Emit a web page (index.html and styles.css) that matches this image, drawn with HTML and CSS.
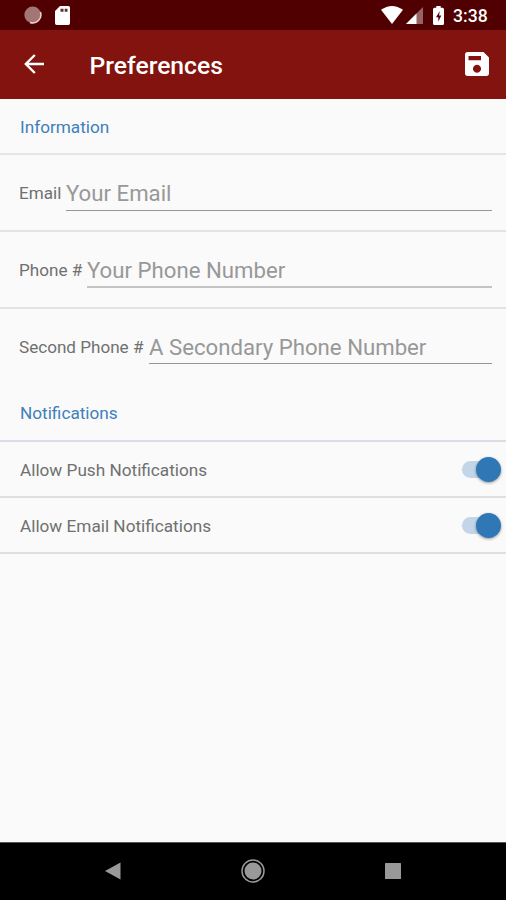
FILE: index.html
```html
<!DOCTYPE html>
<html lang="en">
<head>
<meta charset="utf-8">
<title>Preferences</title>
<link rel="stylesheet" href="styles.css">
</head>
<body>
<div class="screen">
  <div class="status">
    <svg class="sync" width="18" height="18" viewBox="0 0 18 18"><circle cx="8.700" cy="8.900" r="8.300" fill="#a37676"/><path d="M16.400 6A8.200 8.200 0 0 1 6 16.500" fill="none" stroke="#e9d5d0" stroke-width="1.500"/></svg>
    <svg class="sd" width="15" height="19" viewBox="0 0 15 19"><path d="M5 0h8.200q1.800 0 1.800 1.800v15.400q0 1.800-1.800 1.800H1.800Q0 19 0 17.200V5z" fill="#fff"/><path d="M5.500 2.800h3v3h-3zM9.700 2.800h2.800v3H9.700z" fill="#6b2a2a"/></svg>
    <svg class="wifi" width="22" height="18" viewBox="0 0 22 18"><path d="M0 3.800Q11-3.800 22 3.800L11 18z" fill="#fff"/></svg>
    <svg class="signal" width="17" height="17" viewBox="0 0 17 17"><path d="M17 0v17H0z" fill="#966464"/><path d="M10.500 6.500V17H0z" fill="#fff"/></svg>
    <svg class="battery" width="11" height="19" viewBox="0 0 11 19"><path d="M3.300 0h4.400v1.800h1.800Q11 1.800 11 3.300v14.200q0 1.500-1.500 1.500h-8Q0 19 0 17.500V3.300q0-1.500 1.500-1.500h1.800z" fill="#fff"/><path d="M6.800 5L3 11.300h2.300v4.400L8.300 9.500H6z" fill="#500000"/></svg>
    <span class="clock">3:38</span>
  </div>
  <header class="toolbar">
    <svg class="back" width="21" height="20" viewBox="0 0 21 20"><path d="M20 10H2M10.800 1L1.800 10l9 9" fill="none" stroke="#fff" stroke-width="2.400"/></svg>
    <h1 class="title">Preferences</h1>
    <svg class="save" width="24" height="24" viewBox="0 0 24 24"><path fill-rule="evenodd" d="M2.700 0H18.500L24 5.500v15.800q0 2.700-2.700 2.700H2.700Q0 24 0 21.300V2.700Q0 0 2.700 0zM3.500 4v4.200H16V4zM12 12.700a4 4 0 1 0 .01 0z" fill="#fff"/></svg>
  </header>
  <main class="content">
    <h2 class="section">Information</h2>
    <label class="field"><span class="name email">Email</span><span class="input"><span>Your Email</span></span></label>
    <label class="field middle"><span class="name phone">Phone #</span><span class="input"><span>Your Phone Number</span></span></label>
    <label class="field last"><span class="name second">Second Phone #</span><span class="input"><span>A Secondary Phone Number</span></span></label>
    <h2 class="section notify">Notifications</h2>
    <div class="row"><span>Allow Push Notifications</span><span class="switch"><i class="thumb"></i></span></div>
    <div class="row"><span>Allow Email Notifications</span><span class="switch"><i class="thumb"></i></span></div>
  </main>
  <nav class="navbar">
    <svg width="16" height="18" viewBox="0 0 16 18"><path d="M15.500.500v17L0 9z" fill="#999"/></svg>
    <svg width="24" height="24" viewBox="0 0 24 24"><circle cx="12" cy="12" r="11" fill="none" stroke="#999" stroke-width="1.500"/><circle cx="12" cy="12" r="8.500" fill="#999"/></svg>
    <svg width="16" height="16" viewBox="0 0 16 16"><rect width="16" height="16" rx=".5" fill="#999"/></svg>
  </nav>
</div>
</body>
</html>
```
FILE: styles.css
```css
* { box-sizing: border-box; }
body { margin: 0; font-family: Roboto, sans-serif; background: #fafafa; }
.screen { width: 506px; height: 900px; display: flex; flex-direction: column; overflow: hidden; }
svg { display: block; flex: none; }
.status { height: 30px; flex: none; background: #500000; display: flex; align-items: flex-start; padding: 6px 18px 0 24px; }
.sd { margin-left: 13px; }
.wifi { margin-left: auto; }
.signal { margin: 1px 10px 0 3px; }
.clock { width: 35px; margin-left: 9px; color: #fff; font-size: 17.6px; line-height: 20px; font-weight: 500; white-space: nowrap; }
.toolbar { height: 69px; flex: none; background: #83130e; border-bottom: 1px solid #83130e; display: flex; align-items: center; padding: 0 17px 0 24px; color: #fff; }
.title { margin: 4px 0 0 44.5px; font-size: 24.7px; font-weight: 500; line-height: 30px; }
.save { margin: 0 0 0 auto; }
.content { flex: 1; background: #fafafa; }
.section { height: 56px; margin: 0; padding: 0 20px; border-bottom: 2px solid #e3e6e8; color: #3f80ba; font-size: 17.2px; font-weight: 400; line-height: 56px; }
.field { height: 77px; display: flex; align-items: flex-start; padding: 19px 14px 0 19px; border-bottom: 2px solid #e3e3e3; }
.name { flex: none; color: #707070; font-size: 17.1px; line-height: 38px; white-space: nowrap; }
.email { width: 47px; }
.phone { width: 68px; }
.second { width: 130px; }
.input { flex: 1; height: 37px; border-bottom: 1px solid #979797; color: #989898; font-size: 22.2px; line-height: 39px; white-space: nowrap; }
.middle .input { border-bottom: 2px solid #c4c4c4; }
.field.last { height: 76px; border-bottom: 0; padding-top: 18px; }
.last .name { line-height: 40px; }
.last .input { line-height: 40px; }
.notify { height: 57px; border-bottom-color: #dadde5; }
.row { height: 56px; display: flex; align-items: center; justify-content: space-between; padding: 1px 5px 0 20px; border-bottom: 2px solid #dfdfe1; color: #707070; font-size: 17.2px; }
.switch { width: 39px; height: 17px; border-radius: 9px; background: linear-gradient(90deg, #c3d6e8 0 30px, transparent 30px); display: flex; align-items: center; justify-content: flex-end; }
.thumb { width: 25px; height: 25px; border-radius: 50%; background: #2f78b5; box-shadow: 0 1px 3px #0006; }
.navbar { height: 58px; flex: none; background: #000; border-top: 1px solid #555; padding-bottom: 2px; display: grid; grid-template-columns: 140px 140px 140px; justify-content: center; justify-items: center; align-items: center; }
```
